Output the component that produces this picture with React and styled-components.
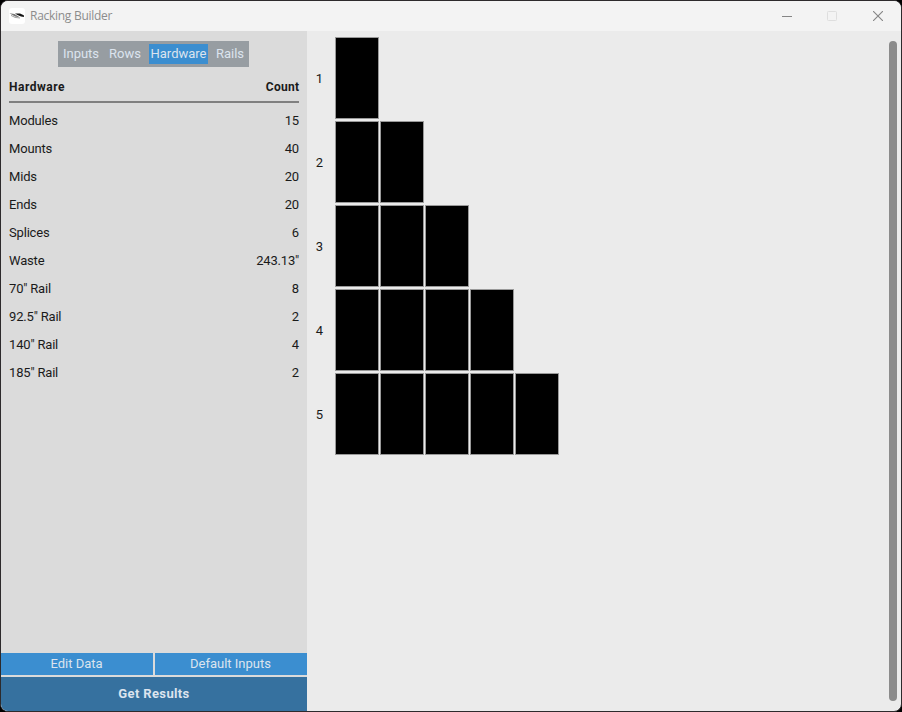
import React from "react";
import styled, { createGlobalStyle } from "styled-components";

const GlobalStyle = createGlobalStyle`
  * { box-sizing: border-box; }
  html, body { margin: 0; background: #000; overflow: hidden; }
`;

const Window = styled.div`
  width: 902px;
  height: 712px;
  display: flex;
  flex-direction: column;
  border: 1px solid #2d2a2c;
  border-radius: 8px;
  overflow: hidden;
  background: #ebebeb;
  color: #1a1a1a;
  font: 13px/20px Roboto, sans-serif;
`;

const TitleBar = styled.header`
  flex: 0 0 30px;
  display: flex;
  align-items: center;
  padding-left: 8px;
  background: #f3f3f3;
`;

const Title = styled.span`
  flex: 1;
  margin-left: 5px;
  color: #8c8c8c;
  font: 12px/16px "Open Sans", sans-serif;
  letter-spacing: -0.28px;
`;

const WindowButton = styled.button`
  width: ${(p) => p.$width || 45}px;
  height: 30px;
  padding: 0;
  border: 0;
  background: none;
  display: grid;
  place-items: center;
  color: ${(p) => (p.disabled ? "#dedede" : "#858585")};
`;

const Body = styled.div`
  flex: 1;
  display: flex;
  min-height: 0;
`;

const Sidebar = styled.aside`
  width: 306px;
  display: flex;
  flex-direction: column;
  background: #dbdbdb;
`;

const Tabs = styled.nav`
  display: flex;
  align-items: center;
  align-self: center;
  width: 191px;
  height: 26px;
  margin-top: 10px;
  margin-right: 1px;
  padding-left: 3px;
  background: #979da2;
`;

const Tab = styled.button`
  flex: 0 0 ${(p) => p.$width}px;
  height: 20px;
  padding: 0;
  border: 0;
  font: 13px/20px Roboto, sans-serif;
  white-space: nowrap;
  color: #dce4ee;
  background: ${(p) => (p.$active ? "#3b8ed0" : "transparent")};
`;

const Table = styled.div`
  flex: 1;
  padding: 10px 8px 0;
`;

const HeaderRow = styled.div`
  display: flex;
  justify-content: space-between;
  height: 26px;
  margin-bottom: 4px;
  border-bottom: 2px solid #808080;
  font-size: 12px;
  font-weight: 700;
`;

const HeaderCell = styled.span`
  letter-spacing: ${(p) => p.$tracking}px;
  margin-right: -${(p) => p.$tracking}px;
`;

const Row = styled.div`
  display: flex;
  justify-content: space-between;
  height: 28px;
  line-height: 28px;
  letter-spacing: -0.18px;
`;

const ButtonPair = styled.div`
  display: grid;
  grid-template-columns: 1fr 1fr;
  gap: 2px;
  margin-bottom: 2px;
`;

const Action = styled.button`
  height: 22px;
  padding: 0 1px 0 0;
  border: 0;
  font: 13px/22px Roboto, sans-serif;
  color: #dce4ee;
  background: #3b8ed0;
`;

const PrimaryAction = styled(Action)`
  height: 34px;
  padding: 0;
  line-height: 34px;
  font-weight: 700;
  letter-spacing: 0.36px;
  background: #36719f;
`;

const Canvas = styled.main`
  flex: 1;
  display: flex;
  flex-direction: column;
  gap: 2px;
  padding-top: 6px;
`;

const ModuleRow = styled.div`
  display: flex;
  gap: 1px;
  height: 82px;
`;

const RowLabel = styled.span`
  width: 27px;
  line-height: 84px;
  text-align: center;
  padding-right: 2px;
`;

const Module = styled.div`
  width: 44px;
  height: 82px;
  border: 1px solid #999;
  background: #000;
`;

const Scrollbar = styled.div`
  width: 8px;
  height: 660px;
  margin: 10px 4px 0 0;
  border-radius: 4px;
  background: #8b8b8b;
`;

const tabs = [["Inputs", 40], ["Rows", 48], ["Hardware", 59], ["Rails", 44]];
const hardware = [
  ["Modules", "15"],
  ["Mounts", "40"],
  ["Mids", "20"],
  ["Ends", "20"],
  ["Splices", "6"],
  ["Waste", '243.13"'],
  ['70" Rail', "8"],
  ['92.5" Rail', "2"],
  ['140" Rail', "4"],
  ['185" Rail', "2"],
];

const AppIcon = () => (
  <svg width="16" height="16" viewBox="0 0 16 16">
    <rect width="16" height="16" rx="3" fill="#fff" />
    <path d="M0.5 5.3 L5.5 6 L11 9.4 L6 8.6 Z" fill="#777" />
    <path d="M2 7.4 L6 9.4 L11 10" stroke="#999" strokeWidth="0.9" fill="none" />
    <path d="M6 5.6 L11 5.6 L14.8 7.2 L15 9 L12 8.6 L8.5 7 Z" fill="#151515" />
  </svg>
);

export default function App() {
  return (
    <>
      <GlobalStyle />
      <Window>
        <TitleBar>
          <AppIcon />
          <Title>Racking Builder</Title>
          <WindowButton aria-label="Minimize">
            <svg width="10" height="10"><path d="M0 5.5H10" stroke="currentColor" /></svg>
          </WindowButton>
          <WindowButton aria-label="Maximize" disabled>
            <svg width="10" height="10"><rect x="0.5" y="0.5" width="9" height="9" rx="0.8" fill="none" stroke="currentColor" /></svg>
          </WindowButton>
          <WindowButton aria-label="Close" $width={47}>
            <svg width="10" height="10"><path d="M0 0L10 10M10 0L0 10" stroke="currentColor" strokeWidth="1.1" /></svg>
          </WindowButton>
        </TitleBar>
        <Body>
          <Sidebar>
            <Tabs>
              {tabs.map(([name, width]) => (
                <Tab key={name} $width={width} $active={name === "Hardware"}>{name}</Tab>
              ))}
            </Tabs>
            <Table>
              <HeaderRow>
                <HeaderCell $tracking={0.5}>Hardware</HeaderCell>
                <HeaderCell $tracking={0.25}>Count</HeaderCell>
              </HeaderRow>
              {hardware.map(([name, count]) => (
                <Row key={name}><span>{name}</span><span>{count}</span></Row>
              ))}
            </Table>
            <ButtonPair>
              <Action>Edit Data</Action>
              <Action>Default Inputs</Action>
            </ButtonPair>
            <PrimaryAction>Get Results</PrimaryAction>
          </Sidebar>
          <Canvas>
            {[1, 2, 3, 4, 5].map((n) => (
              <ModuleRow key={n}>
                <RowLabel>{n}</RowLabel>
                {Array.from({ length: n }, (_, i) => <Module key={i} />)}
              </ModuleRow>
            ))}
          </Canvas>
          <Scrollbar />
        </Body>
      </Window>
    </>
  );
}
